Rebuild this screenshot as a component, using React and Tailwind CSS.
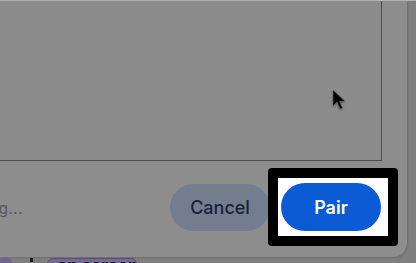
import React from 'react';

const Cursor = () => (
  <svg width="16" height="22" viewBox="0 0 16 22" className="drop-shadow-[0_1px_1px_rgba(0,0,0,0.35)]">
    <path d="M1 1 L1 17 L5 13 L8 20 L10.5 19 L7.6 12.3 L13 12.3 Z" fill="#000" stroke="#6f6f6f" strokeWidth="0.6" />
  </svg>
);

export default function App() {
  return (
    <div className="w-[416px] h-[263px] overflow-hidden bg-[#7f7f7f] border-t border-[#b2b2b2] font-['Inter','Liberation_Sans',sans-serif]">
      <div className="w-[407px] h-[256px] bg-[#8d8d8d] rounded-br-[14px] shadow-[1px_1px_2px_rgba(0,0,0,0.15)] flex flex-col">
        <div className="w-[382px] h-[160px] border-r border-b border-[#4e4e4e] bg-[#8c8c8c] flex items-start justify-end">
          <div className="mt-[88px] mr-[33px]">
            <Cursor />
          </div>
        </div>
        <div className="flex items-start">
          <div className="w-[170px] mt-[37px] overflow-hidden flex justify-end">
            <span className="mr-[147px] text-[15px] text-[#565656] whitespace-nowrap tracking-[0.5px]">Pairing...</span>
          </div>
          <button className="mt-[23px] w-[100px] h-[47px] rounded-full bg-[#737d8e] text-[#16213a] text-[18px] font-medium">
            Cancel
          </button>
          <div className="-ml-[2px] mt-[7px] w-[130px] h-[78px] bg-black rounded-[4px] p-[10px]">
            <div className="w-full h-full bg-white flex items-center pl-[3px]">
              <button className="w-[100px] h-[48px] rounded-full bg-[#0a5bd4] text-white text-[18px] font-semibold">
                Pair
              </button>
            </div>
          </div>
        </div>
      </div>
      <div className="flex items-start h-[7px] mt-[1px]">
        <div className="w-[12px] h-[10px] bg-[#6e6590] rounded-r-full" />
        <div className="ml-[18px] w-[3px] h-[4px] bg-[#1c1c1c]" />
        <div className="ml-[14px] w-[90px] h-[14px] bg-[#74689a] rounded-t-[6px] border border-[#5a5070] pl-[9px]">
          <span className="block -mt-[3px] text-[17px] leading-[20px] text-[#111] font-semibold whitespace-nowrap">on screen</span>
        </div>
      </div>
    </div>
  );
}
